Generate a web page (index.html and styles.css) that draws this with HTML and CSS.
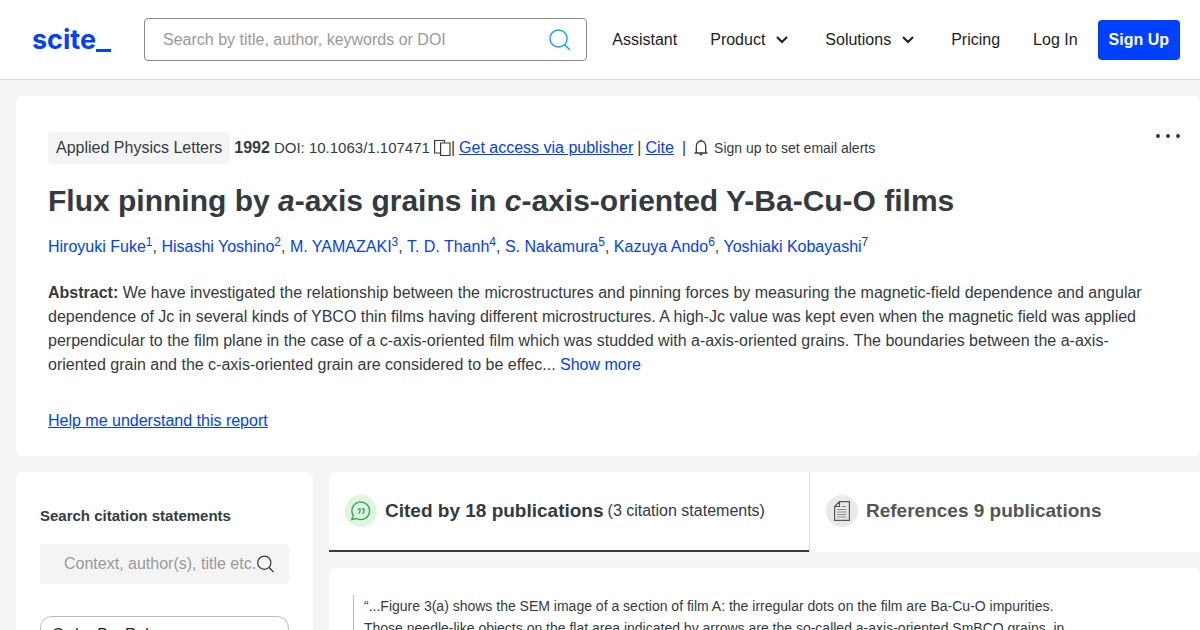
FILE: index.html
```
<!DOCTYPE html>
<html lang="en">
<head>
    <meta charset="UTF-8">
    <meta name="viewport" content="width=device-width, initial-scale=1.0">
    <title>Flux pinning by a-axis grains in c-axis-oriented Y-Ba-Cu-O films - scite</title>
    <link rel="stylesheet" href="styles.css">
</head>
<body>
    <header class="site-header">
        <a class="logo" href="#">scite<span class="logo-bar"></span></a>
        <form class="header-search">
            <input type="text" aria-label="Search papers" placeholder="Search by title, author, keywords or DOI">
            <button type="button" aria-label="Search">
                <svg width="24" height="24" viewBox="0 0 24 24" fill="none" stroke="#1a9fff" stroke-width="1.5">
                    <circle cx="10.5" cy="10.5" r="8.6"/>
                    <path d="M16.5 16.5L22 22"/>
                </svg>
            </button>
        </form>
        <nav class="nav">
            <a href="#">Assistant</a>
            <button type="button">Product
                <svg width="12" height="8" viewBox="0 0 12 8" fill="none" stroke="#1d1d1d" stroke-width="2"><path d="M1 1l5 5 5-5"/></svg>
            </button>
            <button type="button">Solutions
                <svg width="12" height="8" viewBox="0 0 12 8" fill="none" stroke="#1d1d1d" stroke-width="2"><path d="M1 1l5 5 5-5"/></svg>
            </button>
            <a href="#">Pricing</a>
            <a href="#">Log In</a>
        </nav>
        <a class="sign-up" href="#">Sign Up</a>
    </header>

    <main class="page">
        <section class="card paper">
            <button class="more" type="button" aria-label="More options"><i></i><i></i><i></i></button>
            <div class="meta">
                <span class="journal">Applied Physics Letters</span>
                <b>1992</b>
                <span class="doi">DOI: 10.1063/1.107471</span>
                <span class="copy">
                    <button type="button" aria-label="Copy DOI">
                        <svg width="17" height="18" viewBox="0 0 17 18" fill="none" stroke="#333b40" stroke-width="1.2">
                            <path d="M6.5 14H0.6V1.5H10.5V4"/>
                            <path d="M6.6 4H16V16.5H6.6Z"/>
                        </svg>
                    </button>|
                </span>
                <a href="#">Get access via publisher</a>
                <span>|</span>
                <a href="#">Cite</a>
                <span class="bar">|</span>
                <button class="alerts" type="button">
                    <svg width="14" height="18" viewBox="0 0 14 18" fill="none" stroke="#333b40" stroke-width="1.3">
                        <path d="M7 0.5V2M0.5 14H13.5M2.3 14V7.5C2.3 4 4.5 2 7 2S11.7 4 11.700 7.500V14"/>
                        <path d="M5 14.5H9L7 17Z" fill="#333b40" stroke="none"/>
                    </svg>
                    Sign up to set email alerts
                </button>
            </div>
            <h1>Flux pinning by <i>a</i>-axis grains in <i>c</i>-axis-oriented Y-Ba-Cu-O films</h1>
            <p class="authors"><a href="#">Hiroyuki Fuke<sup>1</sup></a>, <a href="#">Hisashi Yoshino<sup>2</sup></a>, <a href="#">M. YAMAZAKI<sup>3</sup></a>, <a href="#">T. D. Thanh<sup>4</sup></a>, <a href="#">S. Nakamura<sup>5</sup></a>, <a href="#">Kazuya Ando<sup>6</sup></a>, <a href="#">Yoshiaki Kobayashi</a><sup>7</sup></p>
            <p class="abstract"><b>Abstract:</b> We have investigated the relationship between the microstructures and pinning forces by measuring the magnetic-field dependence and angular dependence of Jc in several kinds of YBCO thin films having different microstructures. A high-Jc value was kept even when the magnetic field was applied perpendicular to the film plane in the case of a c-axis-oriented film which was studded with a-axis-oriented grains. The boundaries between the a-axis-oriented grain and the c-axis-oriented grain are considered to be effec... <a href="#">Show more</a></p>
            <a class="help" href="#">Help me understand this report</a>
        </section>

        <div class="columns">
            <aside class="card filters">
                <label for="statements">Search citation statements</label>
                <div class="filter-search">
                    <input id="statements" type="text" placeholder="Context, author(s), title etc.">
                    <button type="button" aria-label="Search statements">
                        <svg width="17" height="18" viewBox="0 0 17 18" fill="none" stroke="#333b40" stroke-width="1.2">
                            <circle cx="7.3" cy="7.7" r="6.6"/>
                            <path d="M12 12.5L16.5 17"/>
                        </svg>
                    </button>
                </div>
                <select class="order" aria-label="Order">
                    <option>Order By: Relevance</option>
                </select>
            </aside>

            <div class="results">
                <div class="tabs">
                    <button class="tab active" type="button">
                        <span class="badge green">
                            <svg width="20" height="20" viewBox="0 0 20 20" fill="none" stroke="#3aa655" stroke-width="1.4">
                                <path d="M0.8 18.5L2.3 14.5A8.8 8.8 0 1 1 5.5 17.5Z"/>
                                <path d="M7 8H9V10Q9 12 7.5 12.5M11 8H13V10Q13 12 11.5 12.5"/>
                            </svg>
                        </span>
                        <strong>Cited by 18 publications</strong>
                        <span>(3 citation statements)</span>
                    </button>
                    <button class="tab" type="button">
                        <span class="badge grey">
                            <svg width="16" height="20" viewBox="0 0 16 20" fill="none" stroke="#555" stroke-width="1.2">
                                <path d="M5.5 0.6H15.4V19.4H0.6V5.5ZM5.5 0.6V5.5H0.6"/>
                                <path d="M8 5.5H12M3 8.5H12.5M3 11H12.5M3 13.5H12.5M3 16H12.5" stroke="#888"/>
                            </svg>
                        </span>
                        <strong>References 9 publications</strong>
                    </button>
                </div>
                <article class="card statement">
                    <blockquote>“...Figure 3(a) shows the SEM image of a section of film A: the irregular dots on the film are Ba-Cu-O impurities.<br>Those needle-like objects on the flat area indicated by arrows are the so-called a-axis-oriented SmBCO grains, in</blockquote>
                </article>
            </div>
        </div>
    </main>
</body>
</html>
```
FILE: styles.css
```
* {
    box-sizing: border-box;
}

body {
    margin: 0;
    height: 100vh;
    overflow: hidden;
    background: #f4f4f4;
    color: #333b40;
    font-family: "Liberation Sans", Arial, sans-serif;
    font-size: 16px;
    line-height: 24px;
}

a {
    color: #0040ff;
}

button {
    border: none;
    background: none;
    padding: 0;
    color: inherit;
    font: inherit;
    cursor: pointer;
}

svg {
    display: block;
    flex: none;
}

.site-header {
    display: flex;
    align-items: center;
    height: 80px;
    padding: 0 20px 0 32px;
    background: #fff;
    border-bottom: 1px solid #d9d9d9;
}

.logo {
    display: flex;
    align-items: flex-end;
    width: 112px;
    color: #0040ff;
    font-family: Inter, sans-serif;
    font-size: 27px;
    font-weight: 700;
    line-height: 24px;
    text-decoration: none;
}

.logo-bar {
    width: 15px;
    height: 3px;
    background: #0040ff;
}

.header-search {
    display: flex;
    align-items: center;
    flex: 1;
    height: 43px;
    padding: 0 14px 0 18px;
    border: 1px solid #888;
    border-radius: 4px;
}

input {
    flex: 1;
    min-width: 0;
    padding: 0;
    border: none;
    outline: none;
    background: none;
    font: inherit;
}

input::placeholder {
    color: #999;
}

.nav {
    display: flex;
    align-items: center;
    gap: 33px;
    margin: 0 20px 0 25px;
    color: #1d1d1d;
}

.nav a {
    color: inherit;
    text-decoration: none;
}

.nav button {
    display: flex;
    align-items: center;
    gap: 11px;
    margin-right: 4px;
}

.sign-up {
    padding: 8px 11px;
    border-radius: 4px;
    background: #0040ff;
    color: #fff;
    font-weight: 700;
    text-decoration: none;
}

.page {
    padding: 16px 0 0 16px;
}

.card {
    background: #fff;
    border-radius: 6px;
}

.paper {
    position: relative;
    padding: 36px 48px 23px 32px;
}

.more {
    position: absolute;
    top: 38px;
    right: 20px;
    display: flex;
    gap: 6px;
}

.more i {
    width: 4px;
    height: 4px;
    border-radius: 50%;
    background: #333b40;
}

.meta {
    display: flex;
    align-items: center;
    gap: 4px;
}

.journal {
    padding: 4px 8px;
    border-radius: 4px;
    background: #f4f4f4;
}

.doi {
    font-size: 15px;
}

.copy {
    display: flex;
    align-items: center;
}

.bar {
    margin: 0 4px;
}

.alerts {
    display: flex;
    align-items: center;
    gap: 6px;
    font-size: 14px;
}

h1 {
    margin: 16px 0 0;
    font-size: 30px;
    line-height: 42px;
}

.authors {
    margin: 13px 0 0;
}

.authors a,
.abstract a {
    text-decoration: none;
}

sup {
    font-size: 12px;
    line-height: 0;
}

.abstract {
    margin: 22px 0 32px;
}

.help {
    display: inline-block;
}

.columns {
    display: flex;
    gap: 16px;
    margin-top: 16px;
}

.filters {
    flex: none;
    width: 297px;
    padding: 32px 24px;
}

.filters label {
    display: block;
    font-size: 15px;
    font-weight: 700;
}

.filter-search {
    display: flex;
    align-items: center;
    height: 40px;
    margin: 16px 0 32px;
    padding: 0 15px 0 24px;
    border-radius: 4px;
    background: #f4f4f4;
}

.order {
    appearance: none;
    width: 100%;
    height: 38px;
    padding: 0 11px;
    border: 1px solid #bbb;
    border-radius: 12px;
    background: #fff;
    color: #222;
    font: inherit;
}

.results {
    flex: 1;
    min-width: 0;
}

.tabs {
    display: flex;
    height: 80px;
    border-radius: 6px 0 0 0;
    background: #fff;
    overflow: hidden;
}

.tab {
    display: flex;
    align-items: center;
    gap: 4px;
    padding: 0 16px 2px;
    color: #555;
    white-space: nowrap;
}

.tab.active {
    width: 480px;
    padding-bottom: 0;
    border-bottom: 2px solid #333b40;
    color: #333b40;
}

.tab + .tab {
    border-left: 1px solid #ddd;
}

.tab strong {
    font-size: 19px;
}

.badge {
    display: flex;
    align-items: center;
    justify-content: center;
    width: 32px;
    height: 32px;
    margin-right: 4px;
    border-radius: 50%;
}

.green {
    background: #dff5e1;
}

.grey {
    background: #e9e9e9;
}

.statement {
    margin-top: 16px;
    padding: 27px 24px;
}

blockquote {
    margin: 0;
    padding-left: 10px;
    border-left: 1px solid #bbb;
    font-size: 14px;
    line-height: 22px;
    white-space: nowrap;
}
```
